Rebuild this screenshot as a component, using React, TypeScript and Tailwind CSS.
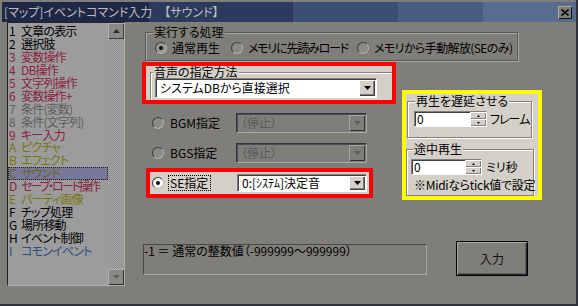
import React from "react";

type Item = { k: string; t: string; c: string; sel?: boolean; tight?: boolean };

const items: Item[] = [
  { k: "1", t: "文章の表示", c: "text-black" },
  { k: "2", t: "選択肢", c: "text-black" },
  { k: "3", t: "変数操作", c: "text-[#8a1f3e]" },
  { k: "4", t: "DB操作", c: "text-[#8a1f3e]" },
  { k: "5", t: "文字列操作", c: "text-[#8a1f3e]" },
  { k: "6", t: "変数操作+", c: "text-[#8a1f3e]" },
  { k: "7", t: "条件(変数)", c: "text-[#5e5e5e]" },
  { k: "8", t: "条件(文字列)", c: "text-[#5e5e5e]" },
  { k: "9", t: "キー入力", c: "text-[#8a1f3e]" },
  { k: "A", t: "ピクチャ", c: "text-[#76760f]" },
  { k: "B", t: "エフェクト", c: "text-[#76760f]" },
  { k: "C", t: "サウンド", c: "text-[#66661a]", sel: true },
  { k: "D", t: "セーブ・ロード操作", c: "text-[#8a1f3e]", tight: true },
  { k: "E", t: "パーティ画像", c: "text-[#76760f]" },
  { k: "F", t: "チップ処理", c: "text-black" },
  { k: "G", t: "場所移動", c: "text-black" },
  { k: "H", t: "イベント制御", c: "text-black" },
  { k: "I", t: "コモンイベント", c: "text-[#2e4c80]" },
];

function Radio({ checked, dim }: { checked?: boolean; dim?: boolean }) {
  return (
    <span
      className={`flex h-[12px] w-[12px] shrink-0 items-center justify-center rounded-full border border-t-[#3a3a3a] border-l-[#3a3a3a] border-r-[#b4b2ac] border-b-[#b4b2ac] ${
        dim ? (checked ? "bg-[#9a9995]" : "bg-[#8b8a86]") : "bg-white"
      }`}
    >
      {checked && <span className="h-[4px] w-[4px] rounded-full bg-[#111]" />}
    </span>
  );
}

function Tri({ up, color }: { up?: boolean; color: string }) {
  return (
    <svg width="7" height="4" viewBox="0 0 7 4">
      <path d={up ? "M3.5 0 L7 4 L0 4 Z" : "M0 0 L7 0 L3.5 4 Z"} fill={color} />
    </svg>
  );
}

function Combo({ text, w, h, dim }: { text: string; w: string; h: string; dim?: boolean }) {
  return (
    <div
      className={`flex ${w} ${h} items-stretch border p-[1px] ${
        dim
          ? "border-t-[#34353f] border-l-[#34353f] border-r-[#a9a7a2] border-b-[#a9a7a2] bg-[#807e79] shadow-[inset_1px_1px_0_#4a4b58]"
          : "border-t-[#808080] border-l-[#808080] border-r-white border-b-white bg-white shadow-[inset_1px_1px_0_#404040]"
      }`}
    >
      <span
        className={`flex flex-1 items-center whitespace-nowrap pl-[3px] text-[12px] leading-[12px] ${
          dim ? "text-[#595959]" : "text-black"
        }`}
      >
        {text}
      </span>
      <span
        className={`flex w-[16px] items-center justify-center ${
          dim
            ? "bg-[#807e79] shadow-[inset_1px_1px_0_#a9a7a2,inset_-1px_-1px_0_#2e2f38]"
            : "bg-[#d4d0c8] shadow-[inset_1px_1px_0_#ffffff,inset_-1px_-1px_0_#404040,inset_-2px_-2px_0_#808080]"
        }`}
      >
        <Tri color={dim ? "#5c5c5c" : "#000"} />
      </span>
    </div>
  );
}

function SpinBtn({ up }: { up?: boolean }) {
  return (
    <span className="flex h-[7px] items-center justify-center bg-[#d4d0c8] shadow-[inset_1px_1px_0_#ffffff,inset_-1px_-1px_0_#808080]">
      <svg width="3" height="2" viewBox="0 0 3 2">
        <path d={up ? "M1.5 0 L3 2 L0 2 Z" : "M0 0 L3 0 L1.5 2 Z"} fill="#000" />
      </svg>
    </span>
  );
}

function Spin({ w }: { w: string }) {
  return (
    <div className={`flex h-[16px] shrink-0 ${w} border border-t-[#808080] border-l-[#808080] border-r-white border-b-white bg-white shadow-[inset_1px_1px_0_#404040]`}>
      <span className="flex flex-1 items-center pl-[2px] text-[12px] leading-[12px] text-black">0</span>
      <div className="flex w-[16px] flex-col">
        <SpinBtn up />
        <SpinBtn />
      </div>
    </div>
  );
}

function GroupLabel({ text, left, bg }: { text: string; left: string; bg: string }) {
  return (
    <span className={`absolute -top-[7px] ${left} ${bg} whitespace-nowrap px-[1px] text-[12px] leading-[12px] text-black`}>
      {text}
    </span>
  );
}

export default function App() {
  return (
    <div className="flex h-[306px] w-[578px] flex-col overflow-hidden border-r-2 border-b-2 border-[#2e313b] bg-[#807e79] pl-[2px] pt-[2px] font-['Noto_Sans_CJK_JP',sans-serif] [font-feature-settings:'palt']">
      {/* title bar */}
      <div className="flex h-[20px] shrink-0 items-center justify-between bg-[linear-gradient(90deg,#1e2746_0_147px,#2b3a5d_147px_291px,#3d4f71_291px_396px,#4a5d7f_396px_481px,#586c8e_481px)] pl-[2px] pr-[4px]">
        <span className="text-[12px] leading-[12px] text-[#bdbdbd]">[マップ]イベントコマンド入力　【サウンド】</span>
        <span className="flex h-[13px] w-[14px] items-center justify-center bg-[#807e79] shadow-[inset_1px_1px_0_#a9a7a2,inset_-1px_-1px_0_#141414]">
          <svg width="8" height="7" viewBox="0 0 8 7">
            <path d="M0.5 0.5 L7.5 6.5 M7.5 0.5 L0.5 6.5" stroke="#000" strokeWidth="1.6" />
          </svg>
        </span>
      </div>

      <div className="flex flex-1">
        {/* command list */}
        <div className="ml-[5px] flex h-[264px] w-[118px] shrink-0 border border-t-[#24242c] border-l-[#24242c] border-r-[#b0aea8] border-b-[#b0aea8]">
          <div className="flex-1 overflow-hidden bg-[#9c9c9c] pt-[2px]">
            {items.map((it) => (
              <div
                key={it.k}
                className={`flex h-[12.9px] items-center pl-[1px] text-[12px] leading-[12px] ${it.c} ${
                  it.sel ? "bg-[#78789a] outline-1 -outline-offset-1 outline-dotted outline-[#1e1e24]" : ""
                }`}
              >
                <span className="w-[12px] shrink-0">{it.k}</span>
                <span className={`whitespace-nowrap ${it.tight ? "tracking-[-2px]" : "tracking-[-0.8px]"}`}>{it.t}</span>
              </div>
            ))}
          </div>
          <div className="flex w-[16px] shrink-0 flex-col">
            <span className="flex h-[16px] items-center justify-center bg-[#8a8985] shadow-[inset_1px_1px_0_#b0aea8,inset_-1px_-1px_0_#3a3a44]">
              <Tri up color="#2c2c2c" />
            </span>
            <span className="flex-1 bg-[repeating-conic-gradient(#8c8c8c_0_25%,#a9a9a9_0_50%)] bg-[length:2px_2px]" />
            <span className="flex h-[16px] items-center justify-center bg-[#8a8985] shadow-[inset_1px_1px_0_#b0aea8,inset_-1px_-1px_0_#2e2f3c]">
              <Tri color="#5e5e5e" />
            </span>
          </div>
        </div>

        {/* right side */}
        <div className="ml-[17px] flex flex-col">
          <div className="relative ml-[3px] mt-[10px] h-[29px] w-[373px] border border-[#5a5854] pl-[9px] pt-[9px] shadow-[inset_1px_1px_0_#a9a7a2,1px_1px_0_#a9a7a2]">
            <GroupLabel text="実行する処理" left="left-[7px]" bg="bg-[#807e79]" />
            <div className="flex items-center text-[12px] leading-[12px] text-black">
              <div className="flex w-[76px] shrink-0 items-center gap-[5px]">
                <Radio dim checked />
                <span className="whitespace-nowrap">通常再生</span>
              </div>
              <div className="flex w-[126px] shrink-0 items-center gap-[5px]">
                <Radio dim />
                <span className="whitespace-nowrap tracking-[-1.2px]">メモリに先読みロード</span>
              </div>
              <div className="flex shrink-0 items-center gap-[5px]">
                <Radio dim />
                <span className="whitespace-nowrap tracking-[-0.6px]">メモリから手動解放(SEのみ)</span>
              </div>
            </div>
          </div>

          <div className="mt-[1px] flex">
            <div className="flex w-[254px] shrink-0 flex-col">
              <div className="h-[42px] w-[254px] overflow-hidden border-4 border-[#ff0000] bg-[#d4d0c8]">
                <div className="relative ml-[4px] mt-[6px] border-t border-l border-[#808080] pb-[2px] pl-[4px] pt-[5px] shadow-[inset_1px_1px_0_#ffffff]">
                  <GroupLabel text="音声の指定方法" left="left-[2px]" bg="bg-[#d4d0c8]" />
                  <Combo text="システムDBから直接選択" w="w-[222px]" h="h-[20px]" />
                </div>
              </div>

              <div className="mt-[9px] flex h-[20px] items-center pl-[10px]">
                <Radio dim />
                <span className="ml-[6px] w-[66px] text-[12px] leading-[12px] text-black">BGM指定</span>
                <Combo text="（停止）" w="w-[131px]" h="h-[20px]" dim />
              </div>
              <div className="mt-[10px] flex h-[20px] items-center pl-[10px]">
                <Radio dim />
                <span className="ml-[6px] w-[66px] text-[12px] leading-[12px] text-black">BGS指定</span>
                <Combo text="（停止）" w="w-[131px]" h="h-[20px]" dim />
              </div>

              <div className="ml-[4px] mt-[5px] flex h-[30px] w-[227px] items-center border-4 border-[#ff0000] bg-[#d4d0c8]">
                <span className="ml-[2px]">
                  <Radio checked />
                </span>
                <span className="ml-[4px] w-[43px] border border-dotted border-[#000] px-[1px] text-[12px] leading-[14px] text-black">
                  SE指定
                </span>
                <span className="ml-[26px]">
                  <Combo text="0:[ｼｽﾃﾑ]決定音" w="w-[130px]" h="h-[18px]" />
                </span>
              </div>
            </div>

            <div className="ml-[6px] mt-[28px] h-[110px] w-[140px] shrink-0 overflow-hidden border-4 border-[#ffff00] bg-[#d4d0c8]">
              <div className="relative ml-[1px] mt-[7px] h-[37px] w-[125px] border border-[#808080] pl-[6px] pt-[9px] shadow-[inset_1px_1px_0_#ffffff,1px_1px_0_#ffffff]">
                <GroupLabel text="再生を遅延させる" left="left-[7px]" bg="bg-[#d4d0c8]" />
                <div className="flex items-center">
                  <Spin w="w-[73px]" />
                  <span className="ml-[3px] whitespace-nowrap text-[12px] leading-[12px] tracking-[-1px] text-black">フレーム</span>
                </div>
              </div>
              <div className="relative mt-[11px] h-[47px] w-[128px] border border-[#808080] pl-[4px] pt-[9px] shadow-[inset_1px_1px_0_#ffffff,1px_1px_0_#ffffff]">
                <GroupLabel text="途中再生" left="left-[6px]" bg="bg-[#d4d0c8]" />
                <div className="flex items-center">
                  <Spin w="w-[71px]" />
                  <span className="ml-[4px] whitespace-nowrap text-[12px] leading-[12px] text-black">ミリ秒</span>
                </div>
                <div className="mt-[4px] whitespace-nowrap pl-[3px] text-[12px] leading-[12px] tracking-[-0.3px] text-black">
                  ※Midiならtick値で設定
                </div>
              </div>
            </div>
          </div>

          <div className="mt-[41px] flex items-start">
            <div className="ml-[1px] mt-[3px] h-[31px] w-[284px] whitespace-nowrap border border-t-[#4b4a46] border-l-[#4b4a46] border-r-[#a9a7a2] border-b-[#a9a7a2] text-[12px] leading-[12px] text-black">
              -1 ＝ 通常の整数値（-999999～999999）
            </div>
            <button className="ml-[29px] flex h-[35px] w-[72px] items-center justify-center border border-black bg-[#807e79] text-[12px] leading-[12px] text-[#141414] shadow-[inset_1px_1px_0_#a9a7a2,inset_-1px_-1px_0_#2c2e3a,inset_-2px_-2px_0_#5a5854]">
              入力
            </button>
          </div>
        </div>
      </div>
    </div>
  );
}
